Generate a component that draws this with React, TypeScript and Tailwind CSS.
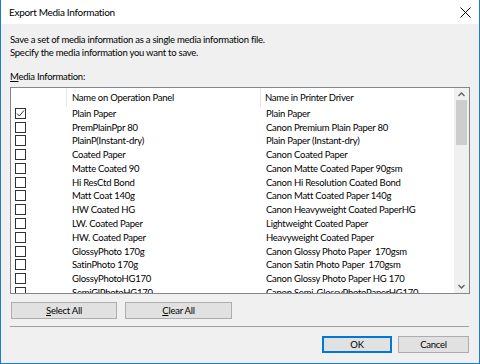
import React from "react";

const rows: [string, string][] = [
  ["Plain Paper", "Plain Paper"],
  ["PremPlainPpr 80", "Canon Premium Plain Paper 80"],
  ["PlainP(Instant-dry)", "Plain Paper (Instant-dry)"],
  ["Coated Paper", "Canon Coated Paper"],
  ["Matte Coated 90", "Canon Matte Coated Paper 90gsm"],
  ["Hi ResCtd Bond", "Canon Hi Resolution Coated Bond"],
  ["Matt Coat 140g", "Canon Matt Coated Paper 140g"],
  ["HW Coated HG", "Canon Heavyweight Coated PaperHG"],
  ["LW. Coated Paper", "Lightweight Coated Paper"],
  ["HW. Coated Paper", "Heavyweight Coated Paper"],
  ["GlossyPhoto 170g", "Canon Glossy Photo Paper  170gsm"],
  ["SatinPhoto 170g", "Canon Satin Photo Paper  170gsm"],
  ["GlossyPhotoHG170", "Canon Glossy Photo Paper HG 170"],
  ["SemiGlPhotoHG170", "Canon Semi-GlossyPhotoPaperHG170"],
];

function Checkbox({ checked }: { checked?: boolean }) {
  return (
    <div className="w-[11px] h-[11px] border border-[#333333] bg-white flex items-center justify-center">
      {checked && (
        <svg width="9" height="9" viewBox="0 0 9 9">
          <path d="M1 4.5 L3.3 7 L8 1.5" fill="none" stroke="#333" strokeWidth="1" />
        </svg>
      )}
    </div>
  );
}

export default function App() {
  return (
    <div
      className="w-[480px] h-[364px] flex flex-col bg-[#f0f0f0] border-x border-b border-[#1a7bd1] text-black text-[9.5px] leading-[13px] tracking-[-0.25px]"
      style={{ fontFamily: 'Lato, "Noto Sans", sans-serif' }}
    >
      <div className="h-[24px] bg-white flex items-center justify-between pl-[8px] pr-[8px] shrink-0">
        <span className="text-[10px] tracking-[-0.3px]">Export Media Information</span>
        <svg width="11" height="11" viewBox="0 0 11 11">
          <path d="M0.5 0.5 L10.5 10.5 M10.5 0.5 L0.5 10.5" stroke="#000" strokeWidth="1" />
        </svg>
      </div>
      <div className="flex flex-col px-[9px] pt-[9px]">
        <div>Save a set of media information as a single media information file.</div>
        <div>Specify the media information you want to save.</div>
        <div className="mt-[11px]">
          <span className="underline">M</span>edia Information:
        </div>
        <div className="mt-[4px] h-[207px] border border-[#828790] bg-white flex overflow-hidden">
          <div className="flex-1 flex flex-col overflow-hidden">
            <div className="h-[18.5px] shrink-0 flex items-stretch">
              <div className="w-[56px] border-r border-[#e5e5e5]" />
              <div className="w-[194px] border-r border-[#e5e5e5] pl-[5px] flex items-center">Name on Operation Panel</div>
              <div className="flex-1 pl-[4px] flex items-center">Name in Printer Driver</div>
            </div>
            {rows.map(([a, b], i) => (
              <div key={i} className="h-[13.78px] shrink-0 flex items-center whitespace-pre">
                <div className="w-[56px] pl-[4px] flex items-center">
                  <Checkbox checked={i === 0} />
                </div>
                <div className="w-[195px] pl-[5px]">{a}</div>
                <div className="flex-1 pl-[4px]">{b}</div>
              </div>
            ))}
          </div>
          <div className="w-[15px] bg-[#f0f0f0] flex flex-col items-center shrink-0">
            <div className="h-[12px] flex items-center justify-center">
              <svg width="7" height="5" viewBox="0 0 7 5">
                <path d="M0.5 4 L3.5 1 L6.5 4" fill="none" stroke="#606060" strokeWidth="1.3" />
              </svg>
            </div>
            <div className="w-[11px] h-[45px] bg-[#cdcdcd]" />
            <div className="flex-1" />
            <div className="h-[14px] flex items-center justify-center">
              <svg width="7" height="5" viewBox="0 0 7 5">
                <path d="M0.5 1 L3.5 4 L6.5 1" fill="none" stroke="#606060" strokeWidth="1.3" />
              </svg>
            </div>
          </div>
        </div>
        <div className="mt-[8px] ml-[1px] flex gap-[8px]">
          <button className="w-[106px] h-[17px] bg-[#e1e1e1] border border-[#adadad] flex items-center justify-center">
            <span><span className="underline">S</span>elect All</span>
          </button>
          <button className="w-[107px] h-[17px] bg-[#e1e1e1] border border-[#adadad] flex items-center justify-center">
            <span><span className="underline">C</span>lear All</span>
          </button>
        </div>
        <div className="mt-[7px] h-px bg-[#a0a0a0] mr-[1px]" />
        <div className="mt-[9px] flex justify-end gap-[6px] pr-[1px]">
          <button className="w-[70px] h-[17px] bg-[#e1e1e1] border-2 border-[#0078d7] flex items-center justify-center">OK</button>
          <button className="w-[71px] h-[17px] bg-[#e1e1e1] border border-[#adadad] flex items-center justify-center">Cancel</button>
        </div>
      </div>
    </div>
  );
}
